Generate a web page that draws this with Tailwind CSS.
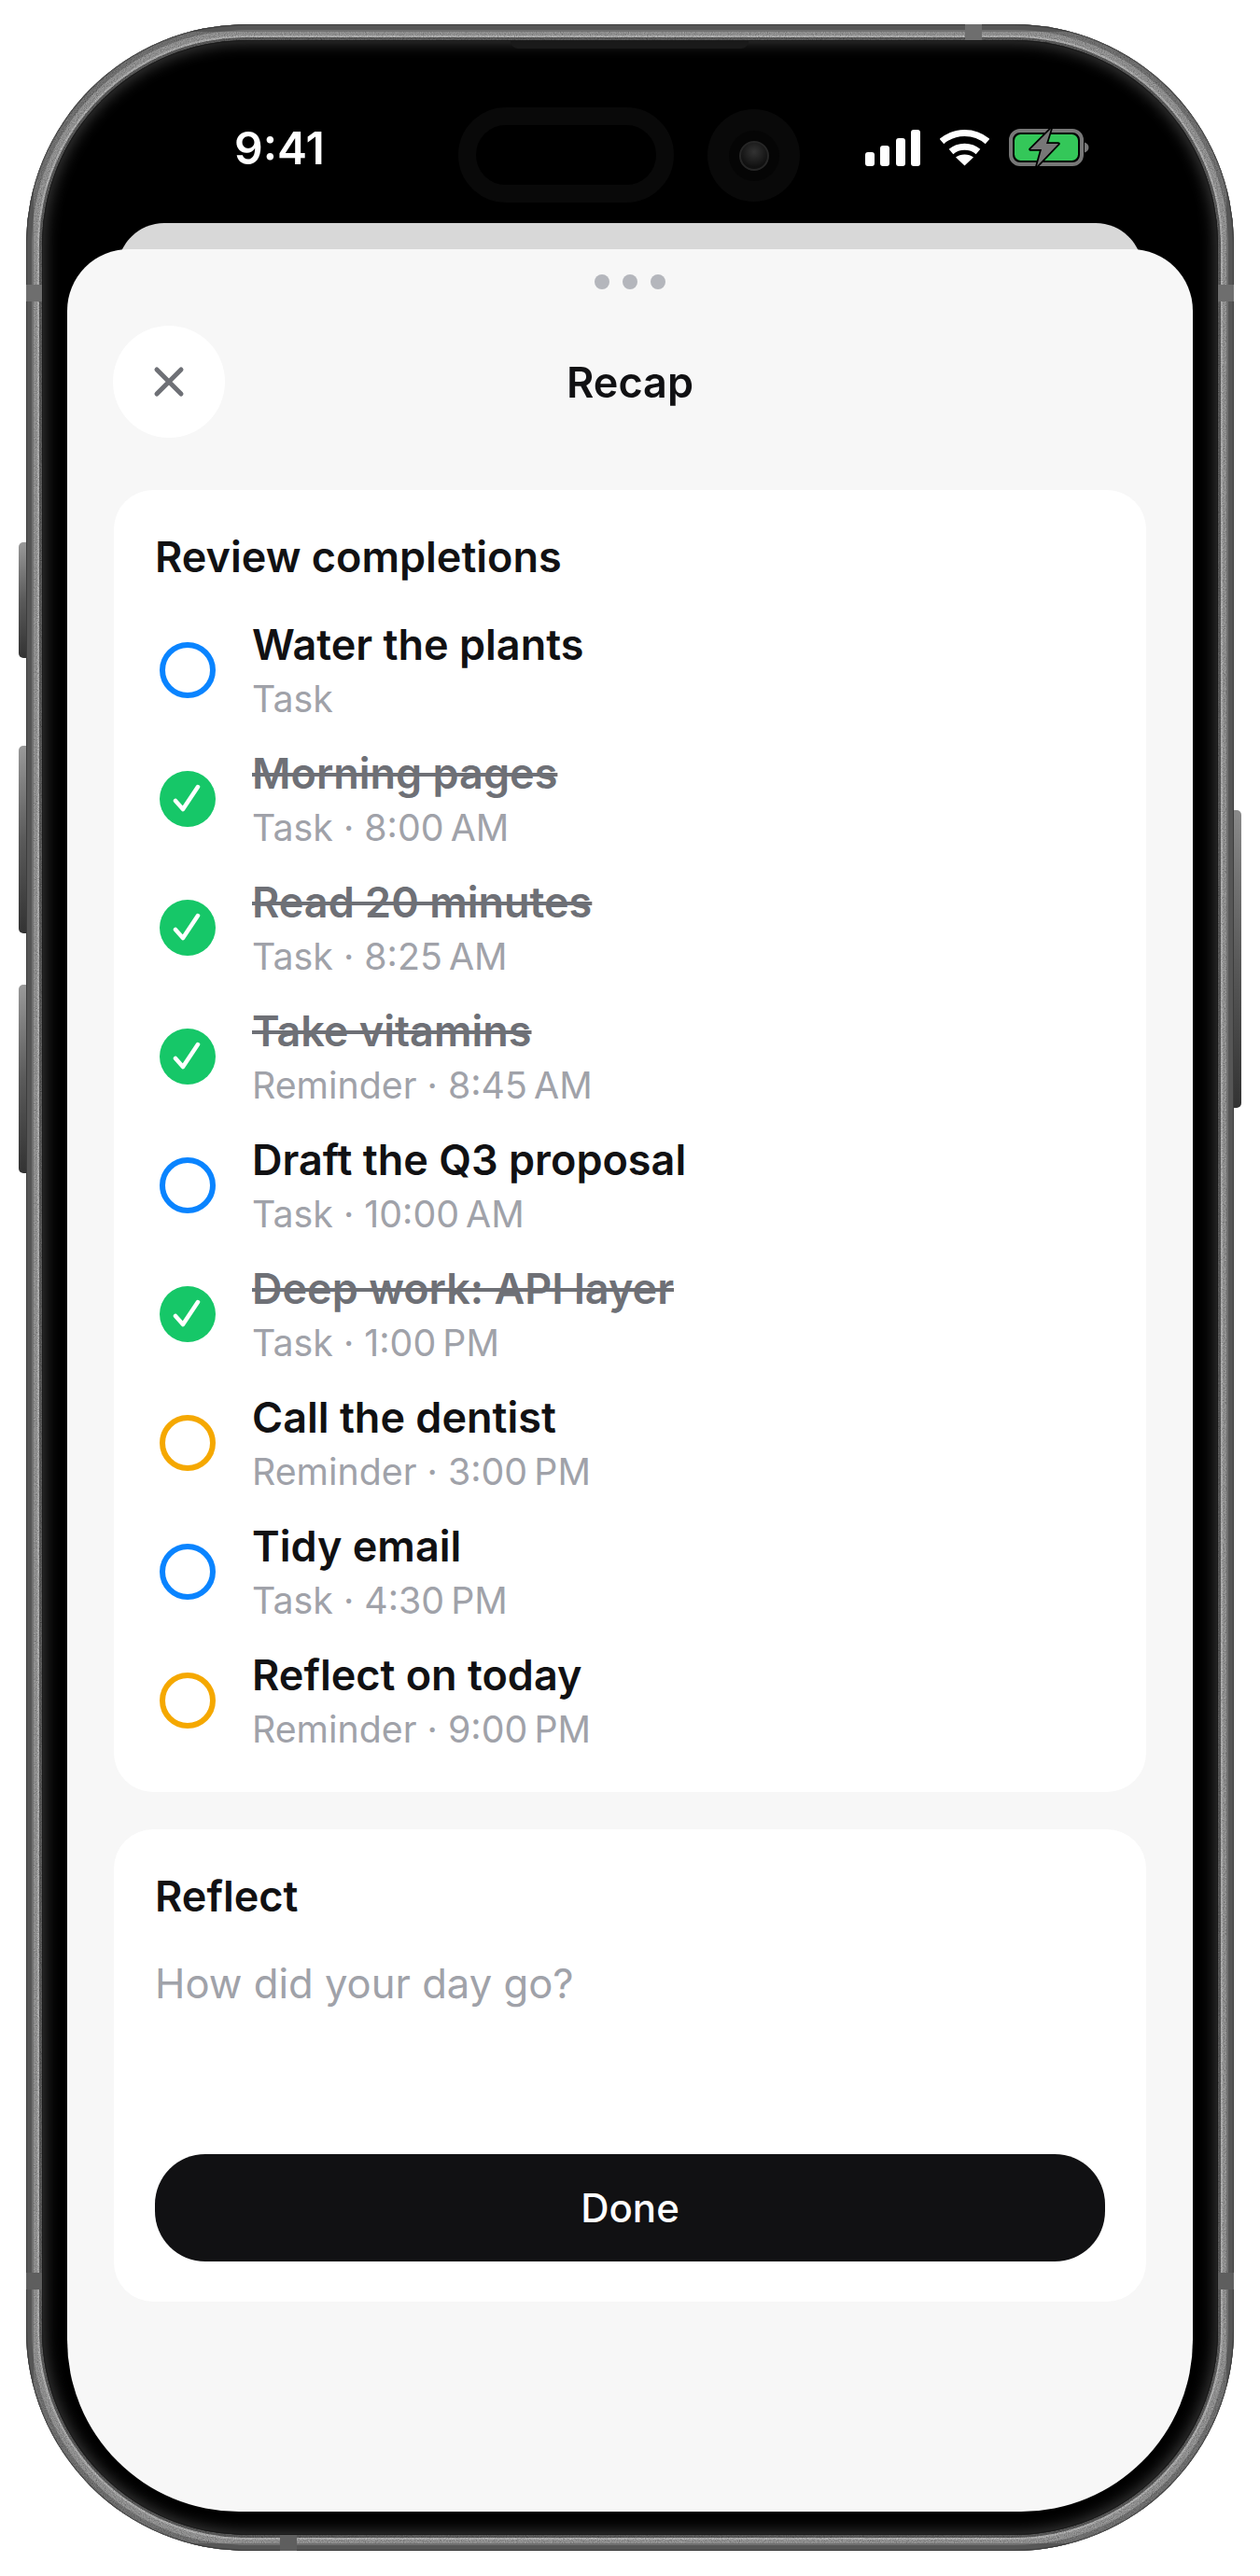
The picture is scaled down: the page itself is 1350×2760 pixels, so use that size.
<!DOCTYPE html>
<html lang="en">
<head>
<meta charset="UTF-8">
<meta name="viewport" content="width=device-width, initial-scale=1.0">
<title>Recap</title>
<script src="https://cdn.jsdelivr.net/npm/@tailwindcss/browser@4"></script>
</head>
<body class="bg-white font-['Inter',sans-serif] antialiased">
<div class="w-[1350px] h-[2760px] pt-[26px] pl-[28px] overflow-hidden">
  <!-- device -->
  <div class="relative w-[1294px] h-[2707px] rounded-[236px] p-[17px] bg-[#444] shadow-[inset_0_0_0_1px_#3c3c3c,inset_0_0_0_6px_#565656,inset_0_0_0_12px_#707070,inset_0_0_0_14px_#8a8a8a]">
    <!-- side buttons -->
    <div class="absolute -left-[8px] top-[555px] w-[8px] h-[124px] rounded-l-[5px] bg-gradient-to-b from-[#9a9a9a] via-[#5a5a5a] to-[#333]"></div>
    <div class="absolute -left-[8px] top-[773px] w-[8px] h-[201px] rounded-l-[5px] bg-gradient-to-b from-[#9a9a9a] via-[#5a5a5a] to-[#333]"></div>
    <div class="absolute -left-[8px] top-[1029px] w-[8px] h-[202px] rounded-l-[5px] bg-gradient-to-b from-[#9a9a9a] via-[#5a5a5a] to-[#333]"></div>
    <div class="absolute -right-[8px] top-[842px] w-[8px] h-[319px] rounded-r-[5px] bg-gradient-to-b from-[#8a8a8a] via-[#5a5a5a] to-[#333]"></div>
    <!-- brushed steel grain -->
    <svg class="absolute inset-0 mix-blend-overlay" width="1294" height="2707" viewBox="0 0 1294 2707" fill="none">
      <filter id="grain" x="0" y="0" width="100%" height="100%">
        <feTurbulence type="fractalNoise" baseFrequency="0.9" numOctaves="2" seed="4"/>
        <feColorMatrix values="1 0 0 0 0 1 0 0 0 0 1 0 0 0 0 0 0 0 0 1"/>
        <feComposite in2="SourceGraphic" operator="in"/>
      </filter>
      <rect x="8.5" y="8.5" width="1277" height="2690" rx="228" stroke="#fff" stroke-width="17" filter="url(#grain)" opacity="0.55"/>
    </svg>
    <!-- antenna bands -->
    <div class="absolute left-0 top-[279px] w-[17px] h-[18px] bg-[#6e6e6e]"></div>
    <div class="absolute right-0 top-[279px] w-[17px] h-[18px] bg-[#6e6e6e]"></div>
    <div class="absolute left-0 top-[2409px] w-[17px] h-[18px] bg-[#5e5e5e]"></div>
    <div class="absolute right-0 top-[2409px] w-[17px] h-[18px] bg-[#5e5e5e]"></div>
    <div class="absolute left-[1006px] top-0 w-[18px] h-[17px] bg-[#6e6e6e]"></div>
    <div class="absolute left-[272px] bottom-0 w-[18px] h-[17px] bg-[#5e5e5e]"></div>

    <div class="relative w-full h-full rounded-[219px] bg-black px-[27px] shadow-[inset_0_0_0_1px_#1a1a1a,inset_0_0_16px_3px_#3c3c3c]">
      <!-- earpiece -->
      <div class="absolute left-[502px] top-0 w-[255px] h-[9px] rounded-b-[8px] bg-[#1a1a1a]"></div>

      <!-- status bar -->
      <div class="relative h-[196px] flex items-start justify-between pt-[87px] pl-[179px] pr-[111px] text-white">
        <span class="text-[48px] leading-[58px] font-semibold">9:41</span>
        <div class="absolute left-[419px] top-[72px] w-[231px] h-[102px] rounded-[51px] border-[19px] border-[#090909]"></div>
        <div class="absolute left-[686px] top-[74px] w-[99px] h-[99px] rounded-full bg-[#090909] flex items-center justify-center">
          <div class="w-[54px] h-[54px] rounded-full bg-[#050505] flex items-center justify-center">
            <div class="w-[32px] h-[32px] rounded-full border-[2px] border-[#262626] bg-[radial-gradient(circle_at_50%_35%,#333,#101010_70%)]"></div>
          </div>
        </div>
        <div class="flex items-center gap-[21px] mt-[7px]">
          <svg width="59" height="39" viewBox="0 0 59 39" fill="#fff"><rect x="0" y="24" width="10" height="15" rx="3"/><rect x="16" y="17" width="10" height="22" rx="3"/><rect x="33" y="9" width="10" height="30" rx="3"/><rect x="49" y="0" width="10" height="39" rx="3"/></svg>
          <svg width="53" height="39" viewBox="0 0 53 39" fill="none" stroke="#fff" stroke-width="7"><path d="M2 12.5C16 .5 37 .5 51 12.5"/><path d="M12 23.5C20 16.500 33 16.500 41 23.5"/><path d="M26.5 38.5L17 29.500C22 25.500 31 25.500 36 29.500Z" fill="#fff" stroke="none"/></svg>
          <svg width="86" height="42" viewBox="0 0 86 42" fill="none"><rect x="2" y="3" width="76" height="36" rx="10" stroke="#777" stroke-width="4"/><rect x="6" y="7" width="68" height="28" rx="6.5" fill="#34c759"/><path d="M81 15.5c3 1 4.500 3 4.500 5.500s-1.500 4.500-4.500 5.500z" fill="#777"/><path d="M45 1L23 23H35L30 41L53 17H40Z" fill="#777" stroke="#000" stroke-width="3.5" stroke-linejoin="round" paint-order="stroke"/></svg>
        </div>
      </div>

      <!-- peeking card behind the sheet -->
      <div class="mx-[54px] h-[60px] rounded-t-[50px] bg-[#d8d8d8]"></div>

      <!-- sheet -->
      <div class="relative -mt-[32px] h-[2424px] rounded-t-[66px] rounded-b-[184px] bg-[#f7f7f7] px-[50px]">
        <div class="flex justify-center gap-[14px] pt-[27px]">
          <span class="w-[16px] h-[16px] rounded-full bg-[#b4b6bc]"></span>
          <span class="w-[16px] h-[16px] rounded-full bg-[#b4b6bc]"></span>
          <span class="w-[16px] h-[16px] rounded-full bg-[#b4b6bc]"></span>
        </div>

        <div class="relative flex items-center justify-center mt-[39px] h-[120px]">
          <div class="absolute left-[-1px] top-0 w-[120px] h-[120px] rounded-full bg-white flex items-center justify-center">
            <svg width="36" height="36" viewBox="0 0 36 36" fill="none" stroke="#6e7076" stroke-width="5" stroke-linecap="round"><path d="M5 5L31 31M31 5L5 31"/></svg>
          </div>
          <h1 class="pt-[2px] text-[45px] leading-[56px] font-semibold text-[#111113]">Recap</h1>
        </div>

        <!-- review card -->
        <section class="mt-[56px] rounded-[42px] bg-white px-[44px] pt-[44px] h-[1395px]">
          <h2 class="text-[45px] leading-[56px] font-semibold text-[#111113] mb-[25px]">Review completions</h2>
          <ul>
            <li class="h-[138px] flex items-center gap-[39px] pl-[5px]">
              <span class="-mt-[2px] w-[60px] h-[60px] rounded-full border-[6px] border-[#0a84ff]"></span>
              <div><p class="text-[45px] leading-[58px] font-semibold text-[#111113]">Water the plants</p><p class="pt-[1px] text-[39.3px] leading-[56px] text-[#a0a2a9]">Task</p></div>
            </li>
            <li class="h-[138px] flex items-center gap-[39px] pl-[5px]">
              <span class="-mt-[2px] w-[60px] h-[60px] rounded-full bg-[#16c768] flex items-center justify-center"><svg width="32" height="32" viewBox="0 0 32 32" fill="none" stroke="#fff" stroke-width="4.500" stroke-linecap="round" stroke-linejoin="round"><path d="M3 18L11 27L27 3"/></svg></span>
              <div><p class="text-[45px] leading-[58px] font-semibold text-[#6e7076] line-through">Morning pages</p><p class="pt-[1px] text-[39.3px] leading-[56px] text-[#a0a2a9]">Task · 8:00&#8239;AM</p></div>
            </li>
            <li class="h-[138px] flex items-center gap-[39px] pl-[5px]">
              <span class="-mt-[2px] w-[60px] h-[60px] rounded-full bg-[#16c768] flex items-center justify-center"><svg width="32" height="32" viewBox="0 0 32 32" fill="none" stroke="#fff" stroke-width="4.500" stroke-linecap="round" stroke-linejoin="round"><path d="M3 18L11 27L27 3"/></svg></span>
              <div><p class="text-[45px] leading-[58px] font-semibold text-[#6e7076] line-through">Read 20 minutes</p><p class="pt-[1px] text-[39.3px] leading-[56px] text-[#a0a2a9]">Task · 8:25&#8239;AM</p></div>
            </li>
            <li class="h-[138px] flex items-center gap-[39px] pl-[5px]">
              <span class="-mt-[2px] w-[60px] h-[60px] rounded-full bg-[#16c768] flex items-center justify-center"><svg width="32" height="32" viewBox="0 0 32 32" fill="none" stroke="#fff" stroke-width="4.500" stroke-linecap="round" stroke-linejoin="round"><path d="M3 18L11 27L27 3"/></svg></span>
              <div><p class="text-[45px] leading-[58px] font-semibold text-[#6e7076] line-through">Take vitamins</p><p class="pt-[1px] text-[39.3px] leading-[56px] text-[#a0a2a9]">Reminder · 8:45&#8239;AM</p></div>
            </li>
            <li class="h-[138px] flex items-center gap-[39px] pl-[5px]">
              <span class="-mt-[2px] w-[60px] h-[60px] rounded-full border-[6px] border-[#0a84ff]"></span>
              <div><p class="text-[45px] leading-[58px] font-semibold text-[#111113]">Draft the Q3 proposal</p><p class="pt-[1px] text-[39.3px] leading-[56px] text-[#a0a2a9]">Task · 10:00&#8239;AM</p></div>
            </li>
            <li class="h-[138px] flex items-center gap-[39px] pl-[5px]">
              <span class="-mt-[2px] w-[60px] h-[60px] rounded-full bg-[#16c768] flex items-center justify-center"><svg width="32" height="32" viewBox="0 0 32 32" fill="none" stroke="#fff" stroke-width="4.500" stroke-linecap="round" stroke-linejoin="round"><path d="M3 18L11 27L27 3"/></svg></span>
              <div><p class="text-[45px] leading-[58px] font-semibold text-[#6e7076] line-through">Deep work: API layer</p><p class="pt-[1px] text-[39.3px] leading-[56px] text-[#a0a2a9]">Task · 1:00&#8239;PM</p></div>
            </li>
            <li class="h-[138px] flex items-center gap-[39px] pl-[5px]">
              <span class="-mt-[2px] w-[60px] h-[60px] rounded-full border-[6px] border-[#f5a800]"></span>
              <div><p class="text-[45px] leading-[58px] font-semibold text-[#111113]">Call the dentist</p><p class="pt-[1px] text-[39.3px] leading-[56px] text-[#a0a2a9]">Reminder · 3:00&#8239;PM</p></div>
            </li>
            <li class="h-[138px] flex items-center gap-[39px] pl-[5px]">
              <span class="-mt-[2px] w-[60px] h-[60px] rounded-full border-[6px] border-[#0a84ff]"></span>
              <div><p class="text-[45px] leading-[58px] font-semibold text-[#111113]">Tidy email</p><p class="pt-[1px] text-[39.3px] leading-[56px] text-[#a0a2a9]">Task · 4:30&#8239;PM</p></div>
            </li>
            <li class="h-[138px] flex items-center gap-[39px] pl-[5px]">
              <span class="-mt-[2px] w-[60px] h-[60px] rounded-full border-[6px] border-[#f5a800]"></span>
              <div><p class="text-[45px] leading-[58px] font-semibold text-[#111113]">Reflect on today</p><p class="pt-[1px] text-[39.3px] leading-[56px] text-[#a0a2a9]">Reminder · 9:00&#8239;PM</p></div>
            </li>
          </ul>
        </section>

        <!-- reflect card -->
        <section class="mt-[40px] rounded-[42px] bg-white px-[44px] pt-[44px] h-[506px]">
          <h2 class="text-[45px] leading-[56px] font-semibold text-[#111113]">Reflect</h2>
          <p class="mt-[38px] text-[43.6px] leading-[56px] text-[#a0a2a9]">How did your day go?</p>
          <button class="mt-[154px] w-full h-[115px] rounded-[54px] bg-[#111113] text-white text-[42px] font-medium">Done</button>
        </section>
      </div>
    </div>
  </div>
</div>
</body>
</html>
